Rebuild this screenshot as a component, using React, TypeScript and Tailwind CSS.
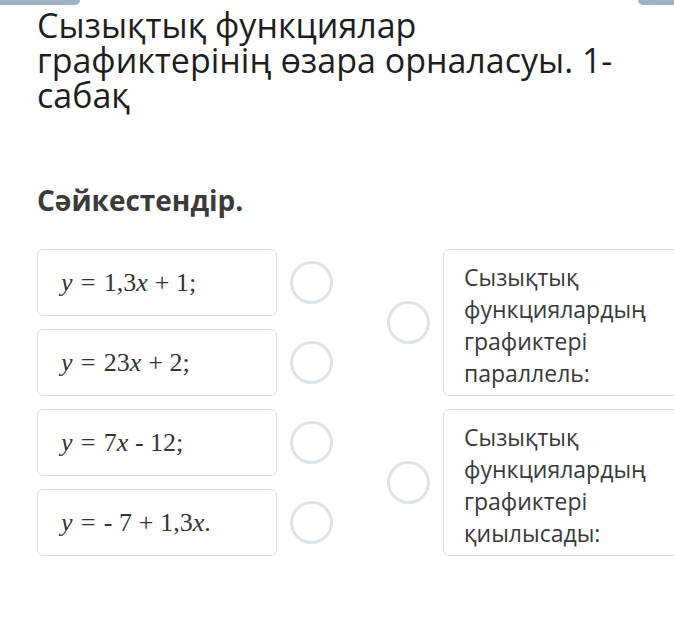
import type { ReactNode } from 'react';

const sans = "font-['Open_Sans','Noto_Sans',sans-serif]";

function V({ children }: { children: ReactNode }) {
  return <span className="italic">{children}</span>;
}

function Rel({ children }: { children: ReactNode }) {
  return <span className="mx-[0.32em]">{children}</span>;
}

function Bin({ children }: { children: ReactNode }) {
  return <span className="mx-[0.26em]">{children}</span>;
}

function Circle() {
  return <div className="h-[43px] w-[43px] shrink-0 rounded-full border-[3px] border-[#dfe3e7] bg-white" />;
}

function EquationCard({ children }: { children: ReactNode }) {
  return (
    <div className="flex items-center gap-[13px]">
      <div className="flex h-[67px] w-[240px] items-center rounded-md border border-[#dcdcdc] bg-white pl-[23px]">
        <span className="font-['Liberation_Serif','DejaVu_Serif',serif] text-[26px] text-[#333]">
          {children}
        </span>
      </div>
      <Circle />
    </div>
  );
}

function AnswerCard({ text }: { text: string }) {
  return (
    <div className="flex items-center gap-[13px]">
      <Circle />
      <div
        className={`h-[147px] w-[240px] shrink-0 rounded-md border border-[#dcdcdc] bg-white pl-[20px] pt-[11px] text-[23px] leading-[32px] text-[#3a3a3a] ${sans}`}
      >
        {text}
      </div>
    </div>
  );
}

export default function App() {
  return (
    <div className="relative h-[627px] w-[674px] overflow-hidden bg-white">
      {/* обрезанные кнопки сверху */}
      <div className="absolute left-0 top-0 h-[5px] w-[80px] rounded-br-md bg-[#9fb0bf]" />
      <div className="absolute right-0 top-0 h-[5px] w-[36px] rounded-bl-md bg-[#9fb0bf]" />

      <div className="px-[37px] pt-[8px]">
        <h1 className={`text-[34px] leading-[35px] font-normal text-[#1e1e1e] ${sans}`}>
          Сызықтық функциялар
          <br />
          графиктерінің өзара орналасуы. 1-
          <br />
          сабақ
        </h1>

        <h2 className={`mt-[66px] text-[28px] font-bold text-[#3b3b3b] ${sans}`}>Сәйкестендір.</h2>

        <div className="mt-[28px] flex gap-[54px]">
          <div className="flex flex-col gap-[13px]">
            <EquationCard>
              <V>y</V>
              <Rel>=</Rel>1,3<V>x</V>
              <Bin>+</Bin>1;
            </EquationCard>
            <EquationCard>
              <V>y</V>
              <Rel>=</Rel>23<V>x</V>
              <Bin>+</Bin>2;
            </EquationCard>
            <EquationCard>
              <V>y</V>
              <Rel>=</Rel>7<V>x</V> - 12;
            </EquationCard>
            <EquationCard>
              <V>y</V>
              <Rel>=</Rel>- 7<Bin>+</Bin>1,3<V>x</V>.
            </EquationCard>
          </div>

          <div className="flex flex-col gap-[13px]">
            <AnswerCard text="Сызықтық функциялардың графиктері параллель:" />
            <AnswerCard text="Сызықтық функциялардың графиктері қиылысады:" />
          </div>
        </div>
      </div>
    </div>
  );
}
